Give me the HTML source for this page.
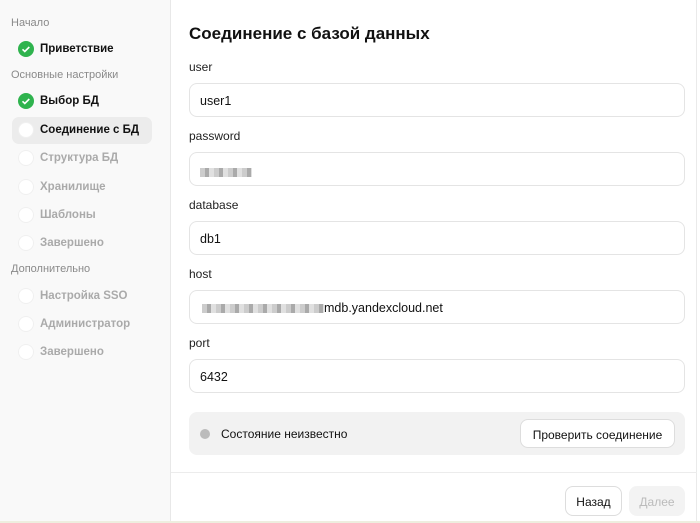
<!DOCTYPE html>
<html><head><meta charset="utf-8"><style>
*{box-sizing:border-box;margin:0;padding:0}
body{width:700px;height:523px;overflow:hidden;background:#fff;font-family:"Liberation Sans","Noto Sans CJK SC",sans-serif;color:#111;position:relative}
.side{position:absolute;left:0;top:0;width:171px;height:523px;background:#f9f9f9;border-right:1px solid #e8e8e8}
.sec{position:absolute;left:11px;font-size:11px;color:#8a8a8a}
.it{position:absolute;left:12px;width:140px;height:27px;border-radius:7px;font-size:11.5px;font-weight:bold;color:#aaa}
.it span{position:absolute;left:28px;top:7px}
.it i{position:absolute;left:6px;top:5px;width:16px;height:16px;border-radius:50%;background:#fff;border:1px solid #f0f0f0}
.it.done{color:#111}.it.done i{background:#2fb34e;border:none}
.it.cur{background:#ececec;color:#111}
.main{position:absolute;left:171px;top:0;width:526px;height:523px;border-right:1px solid #eaeaea}
h1{position:absolute;left:18px;top:24px;font-size:17px;font-weight:bold}
.lb{position:absolute;left:18px;font-size:12px;color:#222}
.in{position:absolute;left:18px;width:496px;height:34px;border:1px solid #e4e4e4;border-radius:8px;font-size:12.5px;padding:10px 0 0 10px}
.blur{display:inline-block;height:9px;background:repeating-linear-gradient(90deg,#ccc 0 5px,#aaa 5px 9px,#e0e0e0 9px 14px);vertical-align:middle}
.st{position:absolute;left:18px;top:412px;width:496px;height:43px;background:#f2f2f2;border-radius:8px}
.btn{position:absolute;border:1px solid #ddd;border-radius:8px;background:#fff;font-size:12px;text-align:center}
</style></head><body>
<div class="side">
<div class="sec" style="top:17px">Начало</div>
<div class="it done" style="top:36px"><i><svg width="16" height="16"><path d="M4.5 8.3l2.3 2.2 4.5-4.5" stroke="#fff" stroke-width="1.6" fill="none"/></svg></i><span>Приветствие</span></div>
<div class="sec" style="top:69px">Основные настройки</div>
<div class="it done" style="top:88px"><i><svg width="16" height="16"><path d="M4.5 8.3l2.3 2.2 4.5-4.5" stroke="#fff" stroke-width="1.6" fill="none"/></svg></i><span>Выбор БД</span></div>
<div class="it cur" style="top:117px"><i></i><span>Соединение с БД</span></div>
<div class="it" style="top:145px"><i></i><span>Структура БД</span></div>
<div class="it" style="top:174px"><i></i><span>Хранилище</span></div>
<div class="it" style="top:202px"><i></i><span>Шаблоны</span></div>
<div class="it" style="top:230px"><i></i><span>Завершено</span></div>
<div class="sec" style="top:263px">Дополнительно</div>
<div class="it" style="top:283px"><i></i><span>Настройка SSO</span></div>
<div class="it" style="top:311px"><i></i><span>Администратор</span></div>
<div class="it" style="top:339px"><i></i><span>Завершено</span></div>
</div>
<div class="main">
<h1>Соединение с базой данных</h1>
<div class="lb" style="top:60px">user</div>
<div class="in" style="top:83px">user1</div>
<div class="lb" style="top:129px">password</div>
<div class="in" style="top:152px;padding-top:12px"><span class="blur" style="width:52px"></span></div>
<div class="lb" style="top:198px">database</div>
<div class="in" style="top:221px">db1</div>
<div class="lb" style="top:267px">host</div>
<div class="in" style="top:290px;padding-left:12px"><span class="blur" style="width:122px"></span>mdb.yandexcloud.net</div>
<div class="lb" style="top:336px">port</div>
<div class="in" style="top:359px">6432</div>
<div class="st"><div style="position:absolute;left:11px;top:17px;width:10px;height:10px;border-radius:50%;background:#bbb"></div><div style="position:absolute;left:32px;top:15px;font-size:12px">Состояние неизвестно</div>
<div class="btn" style="left:331px;top:7px;width:155px;height:29px;padding-top:8px">Проверить соединение</div></div>
<div style="position:absolute;left:0;top:472px;width:526px;border-top:1px solid #ececec"></div>
<div class="btn" style="left:394px;top:486px;width:57px;height:30px;padding-top:8px">Назад</div>
<div class="btn" style="left:458px;top:486px;width:56px;height:30px;padding-top:8px;background:#f3f3f3;border-color:#f3f3f3;color:#bbb">Далее</div>
</div>
<div style="position:absolute;left:0;top:521px;width:700px;height:2px;background:#eeeedf"></div>
</body></html>
